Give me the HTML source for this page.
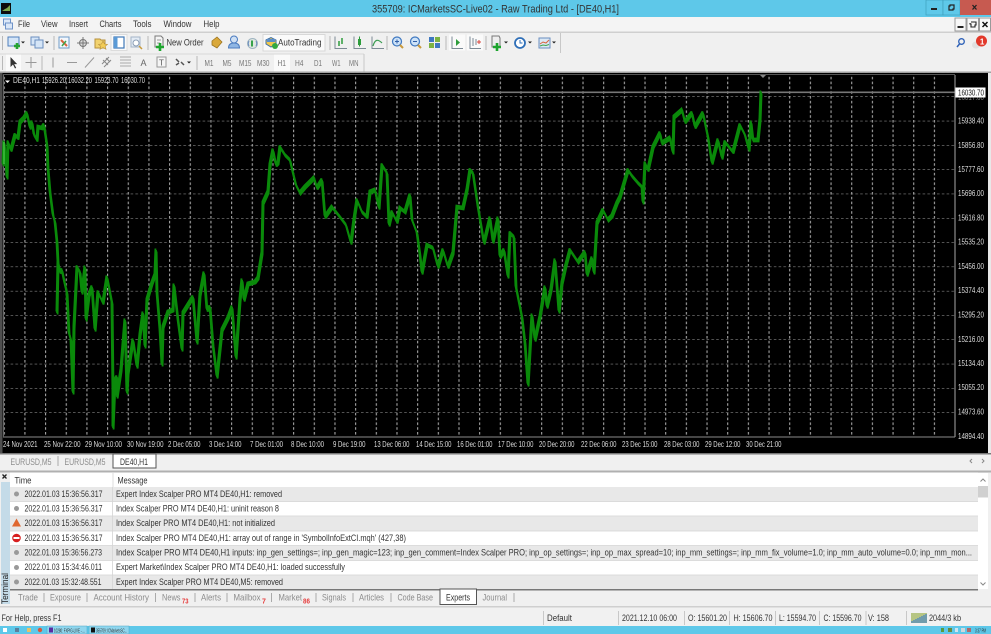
<!DOCTYPE html>
<html><head><meta charset="utf-8"><style>
html,body{margin:0;padding:0;width:991px;height:634px;overflow:hidden;background:#f0f0f0}
svg{display:block;filter:blur(.35px)}
text{font-family:"Liberation Sans",sans-serif;font-size:9px;fill:#333}
.g{fill:#8c8c8c}.a{fill:#ddd;font-size:8px}.w{fill:#ddd;font-size:8px}.r{fill:#e63c3c;font-size:7px;font-weight:bold}.m{fill:#777;font-size:8px}
</style></head><body>
<svg width="991" height="634" viewBox="0 0 991 634" xmlns="http://www.w3.org/2000/svg">
<defs>
<pattern id="gv" x="3.7" y="0" width="20.67" height="4.8" patternUnits="userSpaceOnUse"><rect x="0" y="0" width="1.1" height="2.6" fill="#a6a6a6"/></pattern>
<pattern id="gh" x="0" y="0" width="4.8" height="24.3" patternUnits="userSpaceOnUse" patternTransform="translate(1 -.2)"><rect x="0" y="23.8" width="2.6" height="1.1" fill="#a6a6a6"/></pattern>
<polyline id="pl" fill="none" stroke="#0a8a0a" stroke-width="1.800" stroke-linejoin="miter" stroke-miterlimit="2" points="3,165 4,142 6,160 7,178 8,142 11,150 15,135 18,138 20,122 24,118 27,113 30,128 32,122 34,135 37,140 38,127 42,128 44,125 47,145 48,168 50,192 53,215 55,222 57,242 58,262 57,313 58,262 60,272 62,270 64,280 67,293 69,333 71,340 73,393 74,327 77,267 80,272 82,293 85,267 86,320 89,295 92,287 95,330 98,292 103,303 107,277 112,303 113,393 113,428 115,380 117,377 117,397 121,370 125,320 127,393 128,373 133,340 137,367 140,335 143,313 145,347 147,300 152,283 155,275 156,250 157,293 160,330 162,365 163,327 168,312 173,310 174,285 178,320 182,350 183,313 188,305 193,297 197,343 200,295 204,273 207,310 210,307 213,345 217,377 222,330 228,318 232,307 236,358 240,300 242,280 244,300 248,284 255,282 258,278 262,253 263,203 268,192 270,165 273,150 276,165 278,163 280,147 285,155 290,160 293,173 296,185 300,193 305,187 310,182 314,178 317,188 322,180 325,217 332,207 340,217 346,225 351,243 354,220 357,200 362,212 367,217 370,192 375,190 379,208 382,165 387,173 389,225 392,212 397,222 400,208 405,212 410,195 412,220 414,225 417,233 420,255 422,273 427,245 433,248 438,267 443,250 448,267 453,253 457,207 463,208 467,190 470,170 473,173 478,207 484,243 490,218 493,242 498,218 500,257 504,250 508,277 510,233 514,237 516,287 522,317 525,343 528,385 532,315 535,340 540,317 545,287 547,307 551,290 555,260 559,312 562,283 566,265 570,250 578,262 585,252 587,275 592,258 594,273 597,223 603,210 608,220 612,216 617,203 620,197 625,180 628,170 632,176 638,183 642,187 643,203 645,163 648,170 653,147 660,133 662,143 670,138 673,153 674,117 682,110 685,122 692,113 695,127 703,113 708,137 712,163 718,140 722,158 725,142 733,152 740,125 745,135 749,150 751,122 753,140 758,140 760,120 761,92"/>
</defs>
<!-- title bar -->
<rect width="991" height="17" fill="#5ec8e9"/>
<rect x="1" y="3" width="10" height="11" fill="#0c0c0c"/><path d="M2 11l3-2 2-1 3-3v6H2z" fill="#7aa84a"/>
<text x="372" y="12.500" textLength="247" lengthAdjust="spacingAndGlyphs" style="font-size:11px">355709: ICMarketsSC-Live02 - Raw Trading Ltd - [DE40,H1]</text>
<rect x="926" y="0" width="17" height="15" fill="#5ec8e9" stroke="#3f9fbc" stroke-width=".7"/><rect x="931" y="8" width="6" height="2" fill="#222"/>
<rect x="943" y="0" width="17" height="15" fill="#5ec8e9" stroke="#3f9fbc" stroke-width=".7"/><path d="M950 5h4v4h-1v1h-4v-4h1z" fill="none" stroke="#222" stroke-width="1.200"/>
<rect x="960" y="0" width="31" height="15" fill="#c75a50"/><path d="M972.500 5l4 4.500M976.500 5l-4 4.500" stroke="#222" stroke-width="1.300"/>
<!-- menu -->
<rect y="17" width="991" height="15" fill="#f4f4f4"/>
<rect y="31.500" width="991" height="1.500" fill="#cfcfcf"/>
<rect x="3.500" y="19" width="7" height="6" fill="#dbe7f7" stroke="#6f93c8"/><rect x="5.500" y="23" width="7" height="6" fill="#dbe7f7" stroke="#6f93c8"/>
<text x="18" y="27" textLength="12" lengthAdjust="spacingAndGlyphs">File</text><text x="41" y="27" textLength="16.500" lengthAdjust="spacingAndGlyphs">View</text><text x="69" y="27" textLength="19" lengthAdjust="spacingAndGlyphs">Insert</text><text x="99.500" y="27" textLength="22" lengthAdjust="spacingAndGlyphs">Charts</text><text x="133" y="27" textLength="18.500" lengthAdjust="spacingAndGlyphs">Tools</text><text x="163.500" y="27" textLength="28" lengthAdjust="spacingAndGlyphs">Window</text><text x="203.500" y="27" textLength="16" lengthAdjust="spacingAndGlyphs">Help</text>
<rect x="955" y="18" width="11" height="13" fill="#f7f7f7" stroke="#9a9a9a"/><rect x="957.500" y="26" width="6" height="2" fill="#222"/>
<rect x="967" y="18" width="11.500" height="13" fill="#f7f7f7" stroke="#9a9a9a"/><path d="M971 22h5v3h-1v2h-4v-3h-1v-1" fill="none" stroke="#222" stroke-width="1.100"/>
<rect x="979.500" y="18" width="11" height="13" fill="#f7f7f7" stroke="#9a9a9a"/><path d="M982.500 22l5 5M987.500 22l-5 5" stroke="#111" stroke-width="1.500"/>
<!-- toolbar row 1 -->
<rect y="33" width="991" height="21" fill="#f0f0f0"/>
<rect y="53.500" width="364" height="1" fill="#d8d8d8"/>
<rect x="560" y="33" width="1" height="20" fill="#c8c8c8"/>
<g fill="none" stroke="#b9b9b9"><path d="M2.500 36v14M54 36v14M148 36v14M330 36v14M387 36v14M446 36v14M486 36v14"/></g>
<rect x="8" y="37" width="11" height="9" fill="#d5e5f7" stroke="#4f7fbd"/><path d="M14 46h6M17 43v6" stroke="#26a332" stroke-width="2.600"/>
<path d="M21 41.500h4l-2 2z" fill="#222"/>
<rect x="31" y="37" width="8" height="8" fill="#d5e5f7" stroke="#6a8ebf"/><rect x="35" y="40" width="8" height="8" fill="#d5e5f7" stroke="#6a8ebf"/>
<path d="M45 41.500h4l-2 2z" fill="#222"/>
<rect x="59" y="37" width="10" height="11" fill="#f3f7fc" stroke="#6f9bc8"/><path d="M61 40l6 6" stroke="#d9653d" stroke-width="2"/><path d="M62 46l4-5" stroke="#3fa34d" stroke-width="1.500"/>
<circle cx="83" cy="43" r="3.500" fill="#ddd" stroke="#777"/><path d="M83 37v12M77 43h12" stroke="#777"/>
<path d="M95 39h5l1 1h4v8H95z" fill="#f2d26e" stroke="#b6913c"/><path d="M103 41l1.500 3 3 .3-2.300 2 .8 3-3-1.700-3 1.700.8-3-2.300-2 3-.3z" fill="#f3cc55" stroke="#b6913c" stroke-width=".6"/>
<rect x="111" y="34.500" width="16" height="16" fill="#fafafa" stroke="#dcdcdc"/><rect x="114" y="37" width="10" height="11" fill="#fff" stroke="#3f78b8" stroke-width="1.200"/><rect x="114" y="37" width="3.500" height="11" fill="#5a9ad6"/>
<rect x="131" y="37" width="9" height="10" fill="#e4ecf5" stroke="#a5b5c8"/><circle cx="136" cy="43" r="3" fill="#fff" stroke="#8a9db5"/><path d="M139 46l3 3" stroke="#c89a3c" stroke-width="1.500"/>
<path d="M155 36h6l2 2v9h-8z" fill="#f5f5f5" stroke="#7a7a7a"/><path d="M157 40h4M157 43h3" stroke="#999"/><path d="M156 47h8M160 43v8" stroke="#1ea52e" stroke-width="2.600"/>
<text x="166.500" y="45.500" textLength="37" lengthAdjust="spacingAndGlyphs">New Order</text>
<path d="M212 41l5-4 5 5-5 6-5-3z" fill="#d9a83a" stroke="#9c7420" stroke-width=".8"/>
<circle cx="234" cy="39.500" r="3.500" fill="#cfe0f4" stroke="#4c7cc0"/><path d="M228.500 48c0-4 2.500-5 5.500-5s5.500 1 5.500 5z" fill="#8fb6e4" stroke="#4c7cc0"/>
<circle cx="252.500" cy="43.500" r="5" fill="#dfe7e2" stroke="#9fb4c0"/><path d="M252 40.500v6" stroke="#36a24a" stroke-width="2"/><path d="M249 41c-1 2-1 3 0 5M256 41c1 2 1 3 0 5" stroke="#6b8cc0" fill="none"/>
<rect x="263" y="34.500" width="62" height="16.500" fill="#fafafa" stroke="#d8d8d8"/>
<path d="M266 40l5-2.500 5 2.500v4l-5 3-5-3z" fill="#f2c94c" stroke="#3c6fa8"/><circle cx="275" cy="46" r="3" fill="#35a93f"/><path d="M267 39h8v3h-8z" fill="#5c8fc9"/>
<text x="278" y="45.500" textLength="43.500" lengthAdjust="spacingAndGlyphs">AutoTrading</text>
<g stroke="#7c8a95" fill="none"><path d="M335 36.500v12h12"/><path d="M354 36.500v12h12"/><path d="M372 36.500v12h12"/></g>
<path d="M339 41v5M342 38v6" stroke="#2d9c3c" stroke-width="1.500"/>
<rect x="358" y="39" width="3" height="6" fill="#2d9c3c"/><path d="M359.500 36.500v10" stroke="#2d9c3c"/>
<path d="M373 46c2-7 5-7 9-3" fill="none" stroke="#3a9c52" stroke-width="1.200"/>
<circle cx="397" cy="41.500" r="4.500" fill="#cde2f7" stroke="#3f78c0" stroke-width="1.200"/><path d="M400 45l3 3" stroke="#c99a3c" stroke-width="2"/><path d="M395 41.500h4M397 39.500v4" stroke="#2f5fa8"/>
<circle cx="415" cy="41.500" r="4.500" fill="#cde2f7" stroke="#3f78c0" stroke-width="1.200"/><path d="M418 45l3 3" stroke="#c99a3c" stroke-width="2"/><path d="M413 41.500h4" stroke="#2f5fa8"/>
<rect x="429" y="37" width="5" height="5" fill="#3f78c0"/><rect x="435" y="37" width="5" height="5" fill="#7cb342"/><rect x="429" y="43" width="5" height="5" fill="#7cb342"/><rect x="435" y="43" width="5" height="5" fill="#3f78c0"/>
<rect x="449" y="34.500" width="16" height="16" fill="#fafafa"/><rect x="467" y="34.500" width="16" height="16" fill="#fafafa"/>
<path d="M452 36.500v12h11" stroke="#7c8a95" fill="none"/><path d="M456 39v7l4-3.500z" fill="#2d9c3c"/>
<path d="M470 36.500v12h11" stroke="#7c8a95" fill="none"/><path d="M473 38v8M476 39v6" stroke="#7c8a95"/><path d="M477 42h4M479 40v4" stroke="#d9453c"/>
<path d="M492 36h7l1 2v9h-8z" fill="#eee" stroke="#777"/><path d="M493 47h8M497 43v8" stroke="#1ea52e" stroke-width="2.600"/><path d="M504 41.500h4l-2 2z" fill="#222"/>
<circle cx="520" cy="43" r="5" fill="#fff" stroke="#2f6fb8" stroke-width="1.800"/><path d="M520 40v3h2.500" stroke="#2f6fb8" fill="none"/><path d="M528 41.500h4l-2 2z" fill="#222"/>
<rect x="539" y="38" width="11" height="10" fill="#dbe8f5" stroke="#6a8ebf"/><path d="M540 44l3-2 3 1 3-3" stroke="#d9653d" fill="none"/><path d="M540 46l3-1 3 .5 3-1" stroke="#3fa34d" fill="none"/><path d="M552 41.500h4l-2 2z" fill="#222"/>
<circle cx="961.500" cy="41.500" r="2.800" fill="none" stroke="#2f62b8" stroke-width="1.300"/><path d="M959.500 44l-2.500 3" stroke="#2f62b8" stroke-width="1.500"/>
<ellipse cx="976" cy="45" rx="4" ry="3.500" fill="#e0e0e0"/>
<circle cx="981.500" cy="41" r="5.500" fill="#e2382a"/><text x="979.900" y="44.500" style="fill:#fff;font-size:8px;font-weight:bold">1</text>
<!-- toolbar row 2 -->
<rect y="54.500" width="991" height="18" fill="#f0f0f0"/>
<rect x="363.500" y="54" width="1" height="18" fill="#c8c8c8"/>
<path d="M2.500 56v14M42 56v14M197 56v14" stroke="#b9b9b9"/>
<rect x="6" y="54.500" width="15" height="17" fill="#fafafa"/>
<path d="M10.500 57v10l2.500-2.500 2 4 1.200-.6-2-3.800h3z" fill="#333"/>
<path d="M31 57v11M25.500 62.500h11" stroke="#999"/>
<path d="M53 57.500v10" stroke="#999"/><path d="M67 62.500h10" stroke="#999"/><path d="M85 67.500l9-10" stroke="#999"/>
<path d="M102 64l7-7M104 67l7-7M103 60l5 5M106 58l4 4" stroke="#888" fill="none"/>
<path d="M120 57h11M120 60h11M120 63h11M120 66h11" stroke="#aaa"/>
<text x="140.500" y="66" style="font-size:9px;fill:#666">A</text>
<rect x="157" y="57" width="9" height="10" fill="#f5f5f5" stroke="#999"/><text x="159" y="65.500" style="font-size:8px;fill:#555">T</text>
<path d="M176 59l3 3M181 62l3 3M176 65l3-2" stroke="#555" stroke-width="1.500" fill="none"/><path d="M187 61.500h4l-2 2z" fill="#222"/>
<rect x="274" y="54.500" width="16" height="17" fill="#fafafa"/>
<text class="m" x="204.500" y="66" textLength="9" lengthAdjust="spacingAndGlyphs">M1</text><text class="m" x="222.500" y="66" textLength="9" lengthAdjust="spacingAndGlyphs">M5</text><text class="m" x="239" y="66" textLength="12.500" lengthAdjust="spacingAndGlyphs">M15</text><text class="m" x="257" y="66" textLength="12.500" lengthAdjust="spacingAndGlyphs">M30</text><text class="m" x="277.500" y="66" textLength="8.500" lengthAdjust="spacingAndGlyphs">H1</text><text class="m" x="295" y="66" textLength="8.500" lengthAdjust="spacingAndGlyphs">H4</text><text class="m" x="314" y="66" textLength="8" lengthAdjust="spacingAndGlyphs">D1</text><text class="m" x="332" y="66" textLength="8.500" lengthAdjust="spacingAndGlyphs">W1</text><text class="m" x="349" y="66" textLength="9.500" lengthAdjust="spacingAndGlyphs">MN</text>
<rect y="71.500" width="991" height="1.500" fill="#a0a0a0"/>
<!-- chart -->
<rect x="0" y="73" width="991" height="381" fill="#000"/>
<rect x="0" y="73" width="2.500" height="381" fill="#8f8f8f" opacity=".55"/>
<rect x="988" y="73" width="3" height="381" fill="#e8e8e8"/>
<rect x="3" y="74" width="952" height="1" fill="#555"/>
<rect x="3" y="75" width="952" height="362" fill="url(#gv)"/>
<rect x="3" y="72" width="952" height="365" fill="url(#gh)"/>
<rect x="3" y="91.500" width="952" height="1.600" fill="#777"/>
<rect x="954.500" y="75" width="1" height="362" fill="#a8a8a8"/>
<rect x="3" y="436.500" width="952" height="1" fill="#8a8a8a"/>
<rect x="3" y="75" width="1" height="362" fill="#666"/>
<path d="M760 75h6l-3 3z" fill="#888"/>
<use href="#pl"/><use href="#pl" transform="translate(.6 1.500)"/><use href="#pl" transform="translate(-.6 -1.500)"/>
<path d="M4 142v22" stroke="#45c745" stroke-width="1.400"/>
<path d="M5 80.500h5l-2.500 2.500z" fill="#fff"/>
<text class="w" x="13" y="83" textLength="27" lengthAdjust="spacingAndGlyphs">DE40,H1</text><text class="w" x="42" y="83" textLength="24" lengthAdjust="spacingAndGlyphs">15926.20</text><text class="w" x="68" y="83" textLength="24" lengthAdjust="spacingAndGlyphs">16032.20</text><text class="w" x="94.500" y="83" textLength="24" lengthAdjust="spacingAndGlyphs">15923.70</text><text class="w" x="121" y="83" textLength="24" lengthAdjust="spacingAndGlyphs">16030.70</text>
<!-- price scale -->
<text class="a" x="958" y="100" textLength="26" lengthAdjust="spacingAndGlyphs" style="fill:#777">16017.60</text>
<rect x="955.500" y="87.500" width="30" height="10" fill="#fff"/>
<text x="958" y="95.500" textLength="26" lengthAdjust="spacingAndGlyphs" style="font-size:8px;fill:#111">16030.70</text>
<text class="a" x="958" y="123.500" textLength="26" lengthAdjust="spacingAndGlyphs">15938.40</text><text class="a" x="958" y="148" textLength="26" lengthAdjust="spacingAndGlyphs">15856.80</text><text class="a" x="958" y="172" textLength="26" lengthAdjust="spacingAndGlyphs">15777.60</text><text class="a" x="958" y="196" textLength="26" lengthAdjust="spacingAndGlyphs">15696.00</text><text class="a" x="958" y="220.500" textLength="26" lengthAdjust="spacingAndGlyphs">15616.80</text><text class="a" x="958" y="244.500" textLength="26" lengthAdjust="spacingAndGlyphs">15535.20</text><text class="a" x="958" y="269" textLength="26" lengthAdjust="spacingAndGlyphs">15456.00</text><text class="a" x="958" y="293" textLength="26" lengthAdjust="spacingAndGlyphs">15374.40</text><text class="a" x="958" y="317.500" textLength="26" lengthAdjust="spacingAndGlyphs">15295.20</text><text class="a" x="958" y="342" textLength="26" lengthAdjust="spacingAndGlyphs">15216.00</text><text class="a" x="958" y="366" textLength="26" lengthAdjust="spacingAndGlyphs">15134.40</text><text class="a" x="958" y="390" textLength="26" lengthAdjust="spacingAndGlyphs">15055.20</text><text class="a" x="958" y="414.500" textLength="26" lengthAdjust="spacingAndGlyphs">14973.60</text><text class="a" x="958" y="439" textLength="26" lengthAdjust="spacingAndGlyphs">14894.40</text>
<!-- time scale -->
<text class="a" x="3" y="447" textLength="34.500" lengthAdjust="spacingAndGlyphs">24 Nov 2021</text><text class="a" x="44" y="447" textLength="36.500" lengthAdjust="spacingAndGlyphs">25 Nov 22:00</text><text class="a" x="85" y="447" textLength="37" lengthAdjust="spacingAndGlyphs">29 Nov 10:00</text><text class="a" x="127" y="447" textLength="36.500" lengthAdjust="spacingAndGlyphs">30 Nov 19:00</text><text class="a" x="168" y="447" textLength="32.500" lengthAdjust="spacingAndGlyphs">2 Dec 05:00</text><text class="a" x="209" y="447" textLength="32.500" lengthAdjust="spacingAndGlyphs">3 Dec 14:00</text><text class="a" x="250" y="447" textLength="33" lengthAdjust="spacingAndGlyphs">7 Dec 01:00</text><text class="a" x="291" y="447" textLength="33" lengthAdjust="spacingAndGlyphs">8 Dec 10:00</text><text class="a" x="333" y="447" textLength="32.500" lengthAdjust="spacingAndGlyphs">9 Dec 19:00</text><text class="a" x="374" y="447" textLength="35.500" lengthAdjust="spacingAndGlyphs">13 Dec 06:00</text><text class="a" x="416" y="447" textLength="35.500" lengthAdjust="spacingAndGlyphs">14 Dec 15:00</text><text class="a" x="457" y="447" textLength="35.500" lengthAdjust="spacingAndGlyphs">16 Dec 01:00</text><text class="a" x="498" y="447" textLength="35.500" lengthAdjust="spacingAndGlyphs">17 Dec 10:00</text><text class="a" x="539" y="447" textLength="35.500" lengthAdjust="spacingAndGlyphs">20 Dec 20:00</text><text class="a" x="581" y="447" textLength="35.500" lengthAdjust="spacingAndGlyphs">22 Dec 06:00</text><text class="a" x="622" y="447" textLength="35.500" lengthAdjust="spacingAndGlyphs">23 Dec 15:00</text><text class="a" x="664" y="447" textLength="35.500" lengthAdjust="spacingAndGlyphs">28 Dec 03:00</text><text class="a" x="705" y="447" textLength="35.500" lengthAdjust="spacingAndGlyphs">29 Dec 12:00</text><text class="a" x="746" y="447" textLength="35.500" lengthAdjust="spacingAndGlyphs">30 Dec 21:00</text>
<rect x="0" y="453" width="991" height="1.500" fill="#777"/>
<!-- chart tabs -->
<rect y="454.500" width="991" height="17" fill="#f0f0f0"/>
<rect x="113" y="454" width="43" height="14" fill="#fff" stroke="#555"/>
<text class="g" x="10.500" y="465" textLength="41" lengthAdjust="spacingAndGlyphs">EURUSD,M5</text><text class="g" x="64.500" y="465" textLength="41" lengthAdjust="spacingAndGlyphs">EURUSD,M5</text>
<path d="M58 456v10" stroke="#aaa"/>
<text x="120" y="465" textLength="28" lengthAdjust="spacingAndGlyphs">DE40,H1</text>
<path d="M972 459l-2 2 2 2M982 459l2 2-2 2" stroke="#888" fill="none"/>
<rect y="470.500" width="991" height="2" fill="#b0b0b0"/>
<!-- terminal -->
<rect x="0" y="472.500" width="991" height="134" fill="#f0f0f0"/>
<rect x="1" y="482" width="9" height="122" fill="#c4dbe8"/>
<path d="M2.500 474.500l4 4M6.500 474.500l-4 4" stroke="#222" stroke-width="1.300"/>
<text x="0" y="0" transform="translate(8 604) rotate(-90)" textLength="31" lengthAdjust="spacingAndGlyphs" style="font-size:9px;fill:#222">Terminal</text>
<rect x="10" y="472.500" width="968" height="14.500" fill="#fff"/>
<rect x="112.500" y="473" width="1" height="14" fill="#ddd"/>
<text x="14.500" y="483.500" textLength="17" lengthAdjust="spacingAndGlyphs">Time</text><text x="117.500" y="483.500" textLength="30" lengthAdjust="spacingAndGlyphs">Message</text>
<rect x="10" y="487" width="968" height="14.700" fill="#e8e8e8"/><rect x="10" y="501.700" width="968" height="14.700" fill="#fff"/><rect x="10" y="516.400" width="968" height="14.700" fill="#e8e8e8"/><rect x="10" y="531.100" width="968" height="14.700" fill="#fff"/><rect x="10" y="545.800" width="968" height="14.700" fill="#e8e8e8"/><rect x="10" y="560.500" width="968" height="14.700" fill="#fff"/><rect x="10" y="575.200" width="968" height="13.800" fill="#e8e8e8"/>
<path d="M10 501.500h968M10 516h968M10 531h968M10 545.500h968M10 560.500h968M10 575h968M112.500 487v102" stroke="#d4d4d4" stroke-width=".8"/>
<rect x="10" y="589" width="968" height="1.500" fill="#777"/>
<g fill="#999"><circle cx="16.500" cy="494" r="2.500"/><circle cx="16.500" cy="508.500" r="2.500"/><circle cx="16.500" cy="552.500" r="2.500"/><circle cx="16.500" cy="567.500" r="2.500"/><circle cx="16.500" cy="582" r="2.500"/></g>
<path d="M16.500 518.500l4.500 8h-9z" fill="#e0672f"/>
<circle cx="16.500" cy="538" r="4.300" fill="#d81f1f"/><rect x="13.500" y="537" width="6" height="2" fill="#fff"/>
<text x="24.500" y="497" textLength="78" lengthAdjust="spacingAndGlyphs">2022.01.03 15:36:56.317</text><text x="24.500" y="511.500" textLength="78" lengthAdjust="spacingAndGlyphs">2022.01.03 15:36:56.317</text><text x="24.500" y="526" textLength="78" lengthAdjust="spacingAndGlyphs">2022.01.03 15:36:56.317</text><text x="24.500" y="541" textLength="78" lengthAdjust="spacingAndGlyphs">2022.01.03 15:36:56.317</text><text x="24.500" y="555.500" textLength="77.500" lengthAdjust="spacingAndGlyphs">2022.01.03 15:36:56.273</text><text x="24.500" y="570" textLength="77.500" lengthAdjust="spacingAndGlyphs">2022.01.03 15:34:46.011</text><text x="24.500" y="585" textLength="77" lengthAdjust="spacingAndGlyphs">2022.01.03 15:32:48.551</text>
<text x="116" y="497" textLength="166" lengthAdjust="spacingAndGlyphs">Expert Index Scalper PRO MT4 DE40,H1: removed</text>
<text x="116" y="511.500" textLength="163" lengthAdjust="spacingAndGlyphs">Index Scalper PRO MT4 DE40,H1: uninit reason 8</text>
<text x="116" y="526" textLength="159" lengthAdjust="spacingAndGlyphs">Index Scalper PRO MT4 DE40,H1: not initialized</text>
<text x="116" y="541" textLength="290" lengthAdjust="spacingAndGlyphs">Index Scalper PRO MT4 DE40,H1: array out of range in 'SymbolInfoExtCI.mqh' (427,38)</text>
<text x="116" y="555.500" textLength="856" lengthAdjust="spacingAndGlyphs">Index Scalper PRO MT4 DE40,H1 inputs: inp_gen_settings=; inp_gen_magic=123; inp_gen_comment=Index Scalper PRO; inp_op_settings=; inp_op_max_spread=10; inp_mm_settings=; inp_mm_fix_volume=1.0; inp_mm_auto_volume=0.0; inp_mm_mon...</text>
<text x="116" y="570" textLength="229" lengthAdjust="spacingAndGlyphs">Expert Market\Index Scalper PRO MT4 DE40,H1: loaded successfully</text>
<text x="116" y="585" textLength="167" lengthAdjust="spacingAndGlyphs">Expert Index Scalper PRO MT4 DE40,M5: removed</text>
<!-- scrollbar -->
<rect x="978" y="473" width="10" height="116" fill="#fff"/><rect x="978" y="486" width="10" height="11.500" fill="#d0d0d0"/>
<path d="M980.500 481.500l2.500-2.500 2.500 2.500M980.500 582.500l2.500 2.500 2.500-2.500" stroke="#888" fill="none"/>
<rect x="988" y="473" width="3" height="134" fill="#f0f0f0"/>
<!-- terminal tabs -->
<rect x="440" y="589" width="36.500" height="15.500" fill="#fff" stroke="#555"/>
<text class="g" x="18" y="600.500" textLength="20" lengthAdjust="spacingAndGlyphs">Trade</text><text class="g" x="50" y="600.500" textLength="31" lengthAdjust="spacingAndGlyphs">Exposure</text><text class="g" x="93.500" y="600.500" textLength="55.500" lengthAdjust="spacingAndGlyphs">Account History</text><text class="g" x="162" y="600.500" textLength="18.500" lengthAdjust="spacingAndGlyphs">News</text><text class="r" x="182" y="603.500" textLength="6.500" lengthAdjust="spacingAndGlyphs">73</text><text class="g" x="201" y="600.500" textLength="20" lengthAdjust="spacingAndGlyphs">Alerts</text><text class="g" x="233.500" y="600.500" textLength="27" lengthAdjust="spacingAndGlyphs">Mailbox</text><text class="r" x="262" y="603.500">7</text><text class="g" x="278.500" y="600.500" textLength="23.500" lengthAdjust="spacingAndGlyphs">Market</text><text class="r" x="303" y="603.500" textLength="7" lengthAdjust="spacingAndGlyphs">86</text><text class="g" x="322" y="600.500" textLength="24" lengthAdjust="spacingAndGlyphs">Signals</text><text class="g" x="359" y="600.500" textLength="25" lengthAdjust="spacingAndGlyphs">Articles</text><text class="g" x="397.500" y="600.500" textLength="35.500" lengthAdjust="spacingAndGlyphs">Code Base</text><text x="446" y="600.500" textLength="24" lengthAdjust="spacingAndGlyphs">Experts</text><text class="g" x="482.500" y="600.500" textLength="24.500" lengthAdjust="spacingAndGlyphs">Journal</text>
<path d="M44 593v9M87 593v9M155.500 593v9M195 593v9M227 593v9M271.500 593v9M316 593v9M353 593v9M391 593v9M514 593v9" stroke="#aaa"/>
<rect y="606" width="991" height="1.500" fill="#cfcfcf"/>
<!-- status bar -->
<rect y="607.500" width="991" height="18.500" fill="#f1f1f1"/>
<path d="M543.500 611v14M618.500 611v14M684.500 611v14M729.500 611v14M775.500 611v14M819.500 611v14M866 611v14M906.500 611v14" stroke="#c8c8c8"/>
<text x="1.500" y="621" textLength="60" lengthAdjust="spacingAndGlyphs">For Help, press F1</text><text x="547" y="621" textLength="25" lengthAdjust="spacingAndGlyphs">Default</text><text x="622" y="621" textLength="55" lengthAdjust="spacingAndGlyphs">2021.12.10 06:00</text><text x="688" y="621" textLength="39" lengthAdjust="spacingAndGlyphs">O: 15601.20</text><text x="733.500" y="621" textLength="39" lengthAdjust="spacingAndGlyphs">H: 15606.70</text><text x="779" y="621" textLength="37" lengthAdjust="spacingAndGlyphs">L: 15594.70</text><text x="823.500" y="621" textLength="38" lengthAdjust="spacingAndGlyphs">C: 15596.70</text><text x="868" y="621" textLength="21" lengthAdjust="spacingAndGlyphs">V: 158</text><text x="929" y="621" textLength="32" lengthAdjust="spacingAndGlyphs">2044/3 kb</text>
<g stroke-width="1.200"><path d="M912 613v10M914 613v10M916 613v10M918 613v10M920 613v10M922 613v10M924 613v10M926 613v10" stroke="#8fa83a"/><path d="M912 623v-2M914 623v-3M916 623v-4M918 623v-5M920 623v-6M922 623v-7M924 623v-8M926 623v-9" stroke="#2a6f96"/></g>
<!-- taskbar -->
<rect y="626" width="991" height="8" fill="#5ec8e9"/>
<rect x="47" y="626" width="40" height="8" fill="#8fd6ee" stroke="#4aa6c4" stroke-width=".5"/><rect x="89" y="626" width="40" height="8" fill="#8fd6ee" stroke="#4aa6c4" stroke-width=".5"/>
<rect x="49" y="627.500" width="4" height="5" fill="#5a2ca0"/><rect x="91" y="627.500" width="4" height="5" fill="#111"/>
<text x="54" y="632.500" textLength="31" lengthAdjust="spacingAndGlyphs" style="font-size:5px">10280: FXPIG-LIVE - ...</text><text x="96" y="632.500" textLength="31" lengthAdjust="spacingAndGlyphs" style="font-size:5px">355709: ICMarketsSC...</text>
<rect x="3" y="628" width="4" height="4" fill="#fff"/><rect x="15" y="628" width="4" height="4" fill="#5b7f9c"/><rect x="27" y="628" width="4" height="4" fill="#e5c26a"/><circle cx="40" cy="630" r="2.200" fill="#d8593c"/>
<rect x="941" y="628" width="3" height="4" fill="#5a9a3c"/><rect x="948" y="628" width="4" height="4" fill="#6a8a3c"/><rect x="955" y="628" width="3" height="4" fill="#cfe4ef"/><rect x="961" y="628" width="4" height="4" fill="#cfd8dc"/><rect x="967" y="628" width="4" height="4" fill="#b06a6a"/>
<text x="975" y="632.500" textLength="11" lengthAdjust="spacingAndGlyphs" style="font-size:5px">3:37 PM</text>
</svg>
</body></html>
